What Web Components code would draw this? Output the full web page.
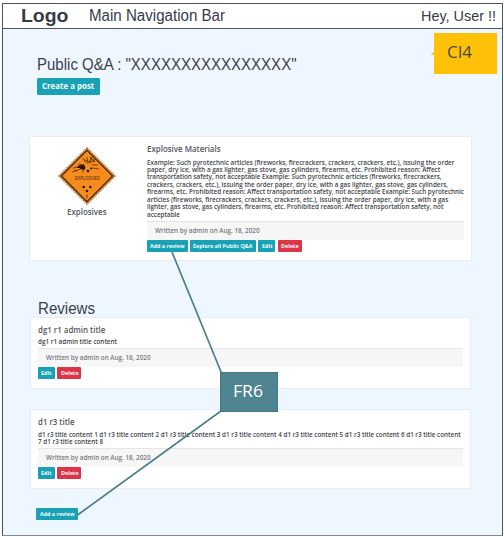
<!DOCTYPE html>
<html lang="en">
<head>
<meta charset="utf-8">
<title>Public Q&amp;A</title>
<style>
html,body{margin:0;width:504px;height:537px;overflow:hidden;background:#fff}
body{font-family:"Open Sans","Noto Sans",sans-serif;color:#53565d}
</style>
</head>
<body>
<qa-page></qa-page>
<script>
const define = (name, html, setup) => customElements.define(name, class extends HTMLElement {
  connectedCallback() {
    if (this.shadowRoot) return;
    const t = document.createElement('template');
    t.innerHTML = html;
    this.attachShadow({mode: 'open'}).append(t.content.cloneNode(true));
    if (setup) setup.call(this, this.shadowRoot);
  }
});

/* One line of text, condensed or widened to span the width given in "w". */
define('fit-line', `<style>
:host{display:block;white-space:nowrap}
div{display:block}
span{display:inline-block;white-space:pre;transform-origin:0 50%;vertical-align:top}
</style><div><span></span></div>`, function (root) {
  const s = root.querySelector('span'), w = +this.getAttribute('w');
  s.textContent = this.getAttribute('text');
  const natural = s.getBoundingClientRect().width;
  if (w && natural) {
    s.style.transform = `scaleX(${(w / natural).toFixed(5)})`;
    root.querySelector('div').style.width = w + 'px';
  }
});

define('ui-button', `<style>
:host{display:flex;box-sizing:border-box;align-items:center;justify-content:center;height:12px;border-radius:1px;background:#19a1b6;color:#f4fcfd;font-size:6px;font-weight:700;line-height:8px}
:host([kind=danger]){background:#dc3548}
:host([large]){height:17px;font-size:8.2px;border-radius:1.5px}
</style><fit-line></fit-line>`, function (root) {
  const f = document.createElement('fit-line');
  f.setAttribute('text', this.getAttribute('label'));
  f.setAttribute('w', this.getAttribute('tw'));
  this.style.width = this.getAttribute('bw') + 'px';
  root.querySelector('fit-line').replaceWith(f);
});

define('top-bar', `<style>
:host{display:flex;box-sizing:border-box;height:25px;align-items:center;padding:0 6px 0 17.5px;background:#fff;border-bottom:1px solid #505357;font-family:"Liberation Sans",Arial,sans-serif;color:#343c47}
.logo{font-size:19.2px;font-weight:700;line-height:24px;width:68.5px}
.nav{font-size:16px;line-height:24px;flex:1}
.user{font-size:14.5px;line-height:24px}
</style>
<fit-line class="logo" text="Logo" w="47.5"></fit-line>
<fit-line class="nav" text="Main Navigation Bar" w="136"></fit-line>
<fit-line class="user" text="Hey, User !!" w="75"></fit-line>`);

define('meta-strip', `<style>
:host{display:flex;box-sizing:border-box;height:19px;align-items:center;padding-left:8px;background:#f6f6f6;border-top:1px solid #e3e5e7;font-size:6.7px;font-weight:600;line-height:10px;color:#777a80}
</style><fit-line text="Written by admin on Aug. 18, 2020" w="104.5"></fit-line>`);

define('ui-card', `<style>
:host{display:block;box-sizing:border-box;background:#fff;border:1px solid #e6edf4;border-radius:1px}
</style><slot></slot>`);

define('hazard-sign', `<style>:host{display:block;width:58px;height:58px}svg{display:block}</style>
<svg width="58" height="58" viewBox="0 0 58 58">
<path d="M29 1.2 56.8 29 29 56.8 1.2 29Z" fill="#f58a1d" stroke="#a9743b" stroke-width="1.8" stroke-dasharray="1.6 .7"/>
<path d="M29 3.4 54.6 29 29 54.6 3.4 29Z" fill="#f68b1e" stroke="#47250c" stroke-width="1.1"/>
<g fill="none" stroke="#5d340f" stroke-width=".8">
<path d="M28 16 25 11M30 17l-1-7M31 16l4-7M27 13l5 2 1-5M32 16l6-4M34 18l6 0M22 19l-7 2M23 22l-9 3M20 17l6 1M35 12l2 3M16 22l3 3M32 10l4 5M34 21l7 1"/></g>
<path d="m21 18.5 5-1 1.5 3-1 2.5-3-.5-2-1.5-3 0Z" fill="#24180c"/>
<g fill="#2d1b0c"><circle cx="30" cy="24" r="1.3"/><circle cx="33" cy="21.5" r="1"/><circle cx="25" cy="24.5" r=".7"/>
<circle cx="25.7" cy="40" r="1.3"/><circle cx="32.3" cy="40" r="1.3"/><circle cx="29" cy="44" r="1.3"/></g>
<text x="17" y="32.7" textLength="24.5" lengthAdjust="spacingAndGlyphs" font-family="Liberation Sans,sans-serif" font-size="5.2" fill="#4a280c">EXPLOSIVES</text>
<path d="M29 47.6v3.5" stroke="#4a280c" stroke-width=".8"/>
</svg>`);

define('post-body', `<style>
:host{display:flex}
.side{width:113px;display:flex;flex-direction:column;align-items:center;padding-top:10px;box-sizing:border-box}
.name{font-size:8.1px;font-weight:600;line-height:12px;margin-top:1px}
.main{width:321px;padding:6px 0 0 3.5px;box-sizing:border-box}
.title{font-size:8.1px;font-weight:600;line-height:12px}
.text{font-size:6.5px;font-weight:600;line-height:7.48px;margin-top:4px;height:62.5px;color:#42464b}
.row{display:flex;gap:2.3px}
</style>
<div class="side"><hazard-sign></hazard-sign><fit-line class="name" text="Explosives" w="39.5"></fit-line></div>
<div class="main"><fit-line class="title" text="Explosive Materials" w="73.5"></fit-line>
<div class="text">
<fit-line text="Example: Such pyrotechnic articles (fireworks, firecrackers, crackers, crackers, etc.), issuing the order" w="307.5"></fit-line>
<fit-line text="paper, dry ice, with a gas lighter, gas stove, gas cylinders, firearms, etc. Prohibited reason: Affect" w="293.2"></fit-line>
<fit-line text="transportation safety, not acceptable Example: Such pyrotechnic articles (fireworks, firecrackers," w="294.5"></fit-line>
<fit-line text="crackers, crackers, etc.), issuing the order paper, dry ice, with a gas lighter, gas stove, gas cylinders," w="301"></fit-line>
<fit-line text="firearms, etc. Prohibited reason: Affect transportation safety, not acceptable Example: Such pyrotechnic" w="317"></fit-line>
<fit-line text="articles (fireworks, firecrackers, crackers, crackers, etc.), issuing the order paper, dry ice, with a gas" w="301.3"></fit-line>
<fit-line text="lighter, gas stove, gas cylinders, firearms, etc. Prohibited reason: Affect transportation safety, not" w="296.5"></fit-line>
<fit-line text="acceptable" w="33"></fit-line>
</div>
<meta-strip></meta-strip>
<div class="row">
<ui-button label="Add a review" tw="34.5" bw="41"></ui-button>
<ui-button label="Explore all Public Q&amp;A" tw="59.5" bw="66.3"></ui-button>
<ui-button label="Edit" tw="10.5" bw="17"></ui-button>
<ui-button label="Delete" tw="17.7" bw="24.2" kind="danger"></ui-button>
</div></div>`);

define('review-body', `<style>
:host{display:block;padding:5px 7.5px 0}
.title{font-size:8.1px;font-weight:600;line-height:13px}
.row{display:flex;gap:2.3px}
</style>
<fit-line class="title"></fit-line><slot></slot><meta-strip></meta-strip>
<div class="row"><ui-button label="Edit" tw="10.5" bw="17"></ui-button><ui-button label="Delete" tw="17.7" bw="24.2" kind="danger"></ui-button></div>`, function (root) {
  const f = document.createElement('fit-line');
  f.className = 'title';
  f.setAttribute('text', this.getAttribute('heading'));
  f.setAttribute('w', this.getAttribute('hw'));
  root.querySelector('fit-line').replaceWith(f);
});

/* Callout boxes and connector lines laid over the page. */
define('callout-layer', `<style>
:host{position:absolute;inset:0;pointer-events:none}
svg{position:absolute;left:0;top:0}
div{position:absolute;display:flex;align-items:center;box-sizing:border-box;font-size:17px;line-height:22px}
.ci{left:434px;top:33px;width:63px;height:41px;background:#ffc008;color:#484a35;padding:0 0 3px 12.5px}
.fr{left:220px;top:372px;width:57.5px;height:39.5px;background:#4f8491;border:1px solid #457783;color:#fff;padding:0 0 2px 11.5px}
</style>
<svg width="504" height="537"><path d="M172 252 221.5 373M221 411 77.5 515" fill="none" stroke="#4b7f8d" stroke-width="1.7"/><path d="M431.5 54.5 434 52.5v1.5Z" fill="#ffc008" stroke="#ffc008" stroke-width="1"/></svg>
<div class="ci"><fit-line text="CI4" w="25"></fit-line></div>
<div class="fr"><fit-line text="FR6" w="30"></fit-line></div>`);

define('qa-page', `<style>
:host{display:block;position:relative;width:504px;height:537px;background:#fff;padding:3px 1px 0 2px;box-sizing:border-box}
.frame{box-sizing:border-box;width:501px;height:533px;background:#eef7ff;border:1px solid #505357;border-bottom:1.5px solid #85898d;display:flex;flex-direction:column;align-items:flex-start}
top-bar{width:100%}
h1,h2{margin:0;font:400 16.2px/20px "Liberation Sans",Arial,sans-serif;color:#3b424d}
h1{margin:25px 0 0 34px}
.create{margin:3.5px 0 0 34px}
.post{margin:41px 0 0 26px;width:442.5px;height:125.5px}
h2{margin:36.5px 0 0 34.5px}
.r1{margin:-1px 0 0 26.5px;width:441.5px;height:72px}
.r2{margin:20px 0 0 26.5px;width:441.5px;height:80px}
.add{margin:19px 0 0 33px}
.copy{font-size:6.5px;font-weight:600;line-height:7.48px;color:#42464b}
.c1{padding:2.5px 0 3px}.c2{padding:3.5px 0 2.5px}
</style>
<div class="frame">
<top-bar></top-bar>
<h1><fit-line text='Public Q&amp;A : "XXXXXXXXXXXXXXXX"' w="259.5"></fit-line></h1>
<ui-button class="create" large label="Create a post" tw="52.3" bw="63"></ui-button>
<ui-card class="post"><post-body></post-body></ui-card>
<h2><fit-line text="Reviews" w="57"></fit-line></h2>
<ui-card class="r1"><review-body heading="dg1 r1 admin title" hw="67.3"><div class="copy c1"><fit-line text="dg1 r1 admin title content" w="79"></fit-line></div></review-body></ui-card>
<ui-card class="r2"><review-body heading="d1 r3 title" hw="36.5"><div class="copy c2"><fit-line text="d1 r3 title content 1 d1 r3 title content 2 d1 r3 title content 3 d1 r3 title content 4 d1 r3 title content 5 d1 r3 title content 6 d1 r3 title content" w="422.7"></fit-line><fit-line text="7 d1 r3 title content 8" w="65"></fit-line></div></review-body></ui-card>
<ui-button class="add" label="Add a review" tw="34.5" bw="41.5"></ui-button>
</div>
<callout-layer></callout-layer>`);
</script>
</body>
</html>
